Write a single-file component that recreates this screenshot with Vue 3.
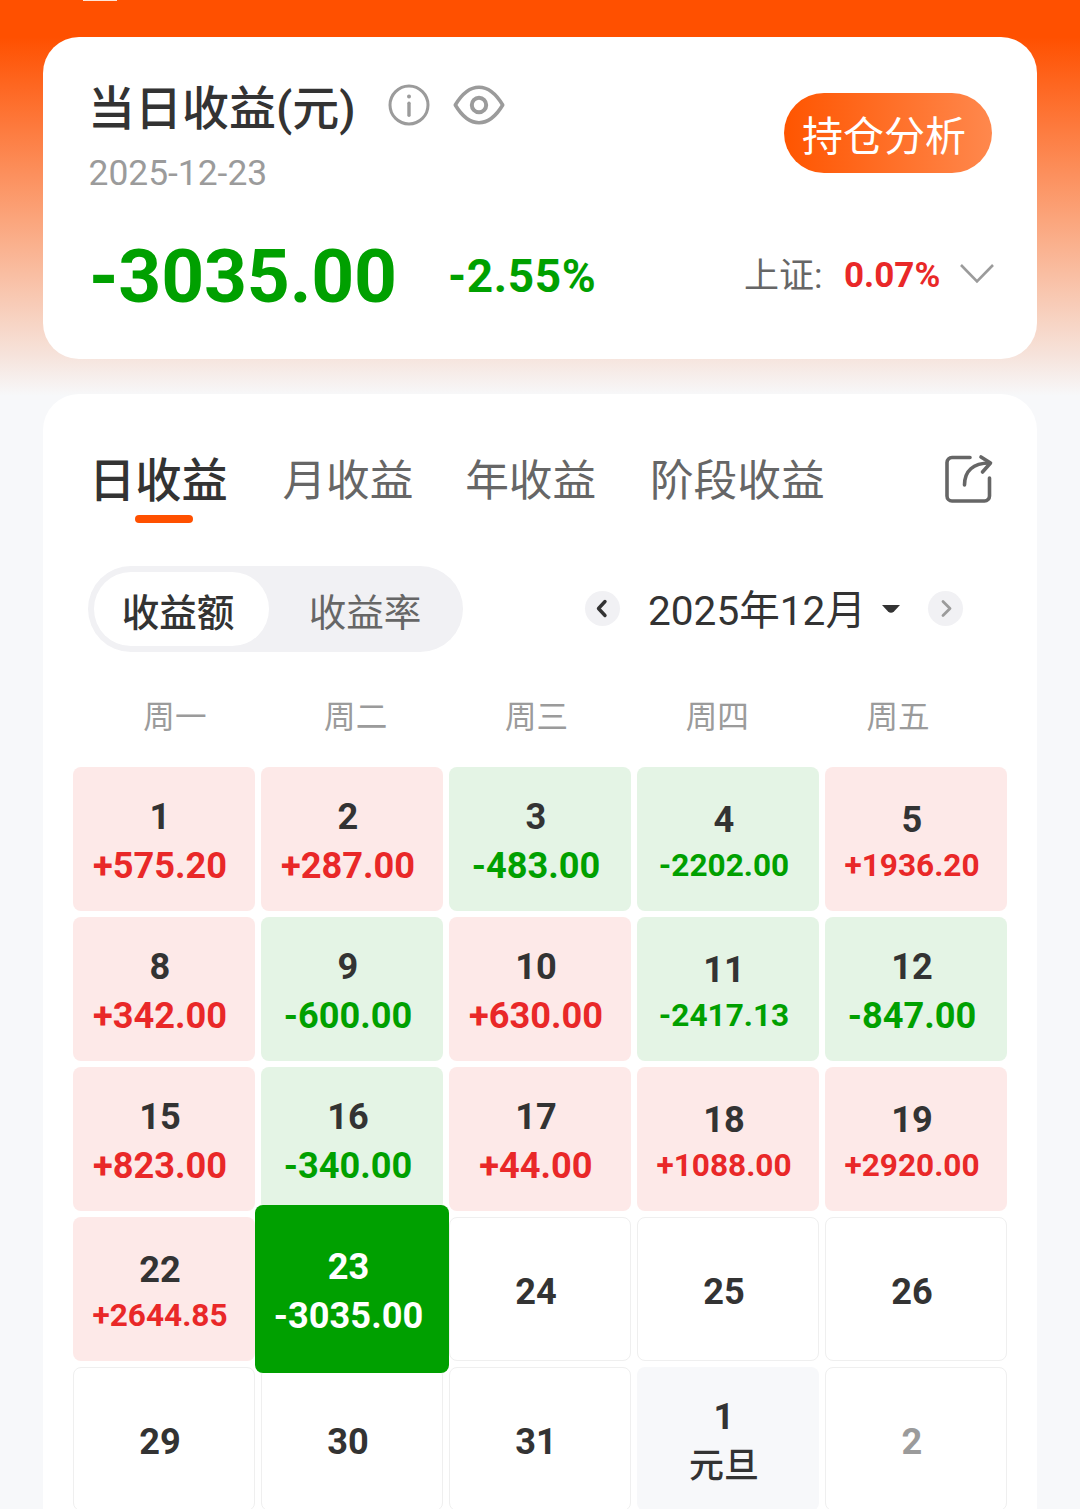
<script setup>
import { ref, computed } from 'vue';

const tabs = ['日收益', '月收益', '年收益', '阶段收益'];
const activeTab = ref('日收益');
const mode = ref('amount');
const selectedKey = ref('12-23');
const weekdays = ['周一', '周二', '周三', '周四', '周五'];

// profit: null means no data for that day yet
const days = ref([
  { key: '12-1', day: 1, profit: 575.2 },
  { key: '12-2', day: 2, profit: 287 },
  { key: '12-3', day: 3, profit: -483 },
  { key: '12-4', day: 4, profit: -2202 },
  { key: '12-5', day: 5, profit: 1936.2 },
  { key: '12-8', day: 8, profit: 342 },
  { key: '12-9', day: 9, profit: -600 },
  { key: '12-10', day: 10, profit: 630 },
  { key: '12-11', day: 11, profit: -2417.13 },
  { key: '12-12', day: 12, profit: -847 },
  { key: '12-15', day: 15, profit: 823 },
  { key: '12-16', day: 16, profit: -340 },
  { key: '12-17', day: 17, profit: 44 },
  { key: '12-18', day: 18, profit: 1088 },
  { key: '12-19', day: 19, profit: 2920 },
  { key: '12-22', day: 22, profit: 2644.85 },
  { key: '12-23', day: 23, profit: -3035 },
  { key: '12-24', day: 24, profit: null },
  { key: '12-25', day: 25, profit: null },
  { key: '12-26', day: 26, profit: null },
  { key: '12-29', day: 29, profit: null },
  { key: '12-30', day: 30, profit: null },
  { key: '12-31', day: 31, profit: null },
  { key: '1-1', day: 1, profit: null, holiday: '元旦' },
  { key: '1-2', day: 2, profit: null, outside: true }
]);

const format = (n) => (n > 0 ? '+' : '') + n.toFixed(2);

const cells = computed(() => days.value.map((d) => {
  const selected = d.key === selectedKey.value;
  return {
    ...d,
    text: d.holiday || (d.profit === null ? '' : format(d.profit)),
    classes: {
      up: d.profit > 0,
      down: d.profit < 0,
      empty: d.profit === null && !d.holiday,
      holiday: !!d.holiday,
      outside: d.outside,
      // long amounts get a smaller font so they fit the cell
      small: Math.abs(d.profit) >= 1000 && !selected,
      selected
    }
  };
}));
</script>

<template>
  <div class="page">
    <div class="status-mark"></div>

    <section class="card summary">
      <div class="summary-top">
        <div>
          <div class="title-row">
            <h1 class="title">当日收益(元)</h1>
            <svg class="info-icon" viewBox="0 0 42 42">
              <circle cx="21" cy="21" r="19" fill="none" stroke="#9b9b9b" stroke-width="3" />
              <circle cx="21" cy="12.6" r="2" fill="#9b9b9b" />
              <path d="M21 19.2v12" stroke="#9b9b9b" stroke-width="3.4" stroke-linecap="round" />
            </svg>
            <svg class="eye-icon" viewBox="0 0 52 42">
              <path d="M2.3 21C8 11.5 16 3.3 26 3.3S44 11.5 49.7 21C44 30.5 36 38.7 26 38.7S8 30.5 2.3 21Z" fill="none" stroke="#9b9b9b" stroke-width="3.6" stroke-linejoin="round" />
              <circle cx="26" cy="21" r="7.2" fill="none" stroke="#9b9b9b" stroke-width="4" />
            </svg>
          </div>
          <div class="date">2025-12-23</div>
        </div>
        <button class="analysis-btn">持仓分析</button>
      </div>
      <div class="summary-bottom">
        <span class="total">-3035.00</span>
        <span class="percent">-2.55%</span>
        <span class="index-name">上证:</span>
        <span class="index-value">0.07%</span>
        <svg class="chevron" viewBox="0 0 36 24">
          <path d="M2 3L18 19.5L34 3" fill="none" stroke="#9b9b9b" stroke-width="2.6" />
        </svg>
      </div>
    </section>

    <section class="card detail">
      <div class="tabs">
        <div
          v-for="tab in tabs"
          :key="tab"
          class="tab"
          :class="{ active: tab === activeTab }"
          @click="activeTab = tab"
        >{{ tab }}</div>
        <svg class="share-icon" viewBox="0 0 50 50">
          <g fill="none" stroke="#666" stroke-width="3.6" stroke-linecap="round" stroke-linejoin="round">
            <path d="M27 3.5H9a5 5 0 0 0-5 5V42a5 5 0 0 0 5 5H41.5a5 5 0 0 0 5-5V24" />
            <path d="M21.500 31C21.500 17 30 9 46.5 9" />
            <path d="M38 3L47.5 9L39.5 18" />
          </g>
        </svg>
      </div>

      <div class="controls">
        <div class="switch">
          <div class="option" :class="{ on: mode === 'amount' }" @click="mode = 'amount'">收益额</div>
          <div class="option" :class="{ on: mode === 'rate' }" @click="mode = 'rate'">收益率</div>
        </div>
        <div class="month-picker">
          <button class="arrow">
            <svg viewBox="0 0 35 35">
              <path d="M20 10.5L13.5 17.5L20 24.5" fill="none" stroke="#333" stroke-width="3.4" stroke-linecap="round" stroke-linejoin="round" />
            </svg>
          </button>
          <span class="month">2025年12月</span>
          <svg class="caret" viewBox="0 0 20 10">
            <path d="M1 1H19L13 7.6Q10 10 7 7.6Z" fill="#333" />
          </svg>
          <button class="arrow">
            <svg viewBox="0 0 35 35">
              <path d="M15 10.5L22 17.5L15 24.5" fill="none" stroke="#9b9b9b" stroke-width="2.8" stroke-linecap="round" stroke-linejoin="round" />
            </svg>
          </button>
        </div>
      </div>

      <div class="weekdays">
        <span v-for="name in weekdays" :key="name">{{ name }}</span>
      </div>

      <div class="calendar">
        <div
          v-for="cell in cells"
          :key="cell.key"
          class="cell"
          :class="cell.classes"
          @click="selectedKey = cell.key"
        >
          <span class="day">{{ cell.day }}</span>
          <span v-if="cell.text" class="profit">{{ cell.text }}</span>
        </div>
      </div>
    </section>
  </div>
</template>

<style>
body { margin: 0; background: #f7f8fa; overflow: hidden; }
</style>

<style scoped>
.page { box-sizing: border-box; width: 1080px; height: 1509px; padding: 0 43px; overflow: hidden; background: linear-gradient(180deg, #ff5000 0, #ff5000 37px, #fba57c 220px, #f6e3db 355px, #f7f8fa 396px); font-family: Roboto, "Noto Sans CJK SC", sans-serif; color: #333; }
.status-mark { width: 34px; height: 1px; margin: 0 0 36.2px 40px; background: #ffe5d6; }
.card { box-sizing: border-box; background: #fff; border-radius: 36px; }
.summary { height: 321.8px; padding: 41.8px 45px 0 46px; }
.summary-top { display: flex; justify-content: space-between; align-items: flex-start; }
.title-row { display: flex; align-items: center; height: 60px; }
.title { margin: 0 0 0 -1px; width: 300px; font-size: 47px; line-height: 60px; font-weight: 500; white-space: nowrap; }
.info-icon { width: 42px; height: 42px; margin-top: -8.5px; }
.eye-icon { width: 52px; height: 42px; margin: -8.5px 0 0 22.5px; }
.date { margin: 12.5px 0 0 -0.5px; font-size: 35.4px; line-height: 44px; color: #9b9b9b; }
.analysis-btn { width: 208px; height: 80px; margin-top: 14px; padding: 8px 0 0 18px; border: none; border-radius: 40px; background: linear-gradient(90deg, #ff5500, #ff884d); color: #fff; font-family: inherit; font-size: 41px; line-height: 72px; text-align: left; }
.summary-bottom { display: flex; align-items: center; height: 90px; margin-top: 36px; white-space: nowrap; }
.summary-bottom > * { flex: none; }
.total { width: 359px; font-size: 75px; line-height: 90px; letter-spacing: -0.2px; font-weight: 700; color: #00a000; }
.percent { width: 296px; font-size: 46px; letter-spacing: 0.6px; font-weight: 700; color: #00a000; }
.index-name { width: 100px; padding-top: 2px; font-size: 35px; line-height: 40px; color: #666; }
.index-value { width: 115px; font-size: 35px; line-height: 42px; font-weight: 700; color: #e92828; }
.chevron { width: 36px; height: 24px; margin-top: -4px; }

.detail { height: 1150px; margin-top: 35px; padding-top: 46px; }
.tabs { display: flex; align-items: center; height: 83px; padding: 0 44px 0 46px; font-size: 43.7px; color: #666; }
.tab { position: relative; margin-right: 51.7px; line-height: 84px; white-space: nowrap; }
.tab + .tab + .tab + .tab { margin-left: 2px; }
.tab.active { margin-right: 54.5px; font-size: 46.3px; font-weight: 500; color: #333; }
.tab.active::after { content: ''; position: absolute; left: 46px; top: 75.5px; width: 58px; height: 8px; border-radius: 4px; background: #ff5000; }
.share-icon { flex: none; width: 50px; height: 50px; margin: -5.5px 0 0 auto; }
.controls { display: flex; align-items: center; margin-top: 43px; padding: 0 74px 0 45px; }
.switch { box-sizing: border-box; display: flex; width: 375px; height: 86px; padding: 6px; border-radius: 43px; background: #f1f1f4; font-size: 37.6px; line-height: 82px; color: #666; }
.option { flex: none; width: 175px; height: 74px; border-radius: 37px; text-align: center; }
.option + .option { width: 192px; }
.option.on { box-sizing: border-box; padding-right: 7px; background: #fff; font-weight: 500; color: #333; }
.month-picker { display: flex; align-items: center; margin-left: auto; }
.arrow { width: 35px; height: 35px; margin-top: -1px; padding: 0; border: none; border-radius: 50%; background: #f1f1f4; }
.arrow svg { display: block; width: 35px; height: 35px; }
.month { margin-left: 28px; padding-top: 5px; font-size: 40.6px; line-height: 81px; white-space: nowrap; }
.caret { width: 20px; height: 10px; margin: 0 27px 0 15px; }
.weekdays { display: flex; width: 904px; margin: 36px 0 0 41.5px; }
.weekdays span { flex: 1; text-align: center; font-size: 31.6px; line-height: 60px; color: #9b9b9b; }
.calendar { display: grid; grid-template-columns: repeat(5, 182px); grid-auto-rows: 144px; gap: 6px; margin: 19px 0 0 30px; }
.cell { box-sizing: border-box; display: flex; flex-direction: column; align-items: center; justify-content: center; padding: 5px 8px 0 0; border-radius: 8px; font-size: 36.2px; line-height: 49px; font-weight: 700; white-space: nowrap; }
.up { background: #fde9e8; }
.up .profit { color: #e92828; }
.down { background: #e4f4e5; }
.down .profit { color: #00a000; }
.small { padding-top: 4px; }
.small .profit { font-size: 31.6px; line-height: 43px; }
.empty { padding-top: 5px; border: 1px solid #efefef; background: #fff; }
.holiday { background: #f7f8fa; }
.holiday .profit { padding-top: 1px; font-size: 35px; font-weight: 500; }
.outside { color: #9b9b9b; }
.selected { position: relative; z-index: 1; margin: -12px -6px; padding-right: 7px; background: #00a000; color: #fff; }
.selected .profit { color: #fff; }
</style>
